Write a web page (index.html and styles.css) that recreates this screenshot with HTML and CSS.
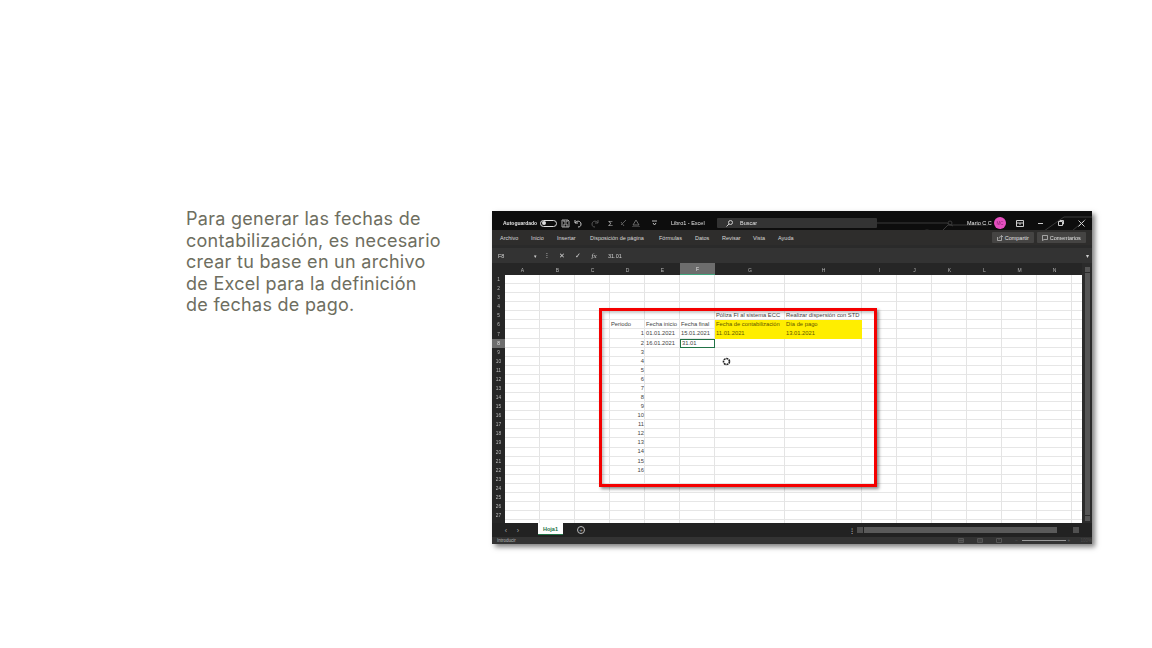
FILE: index.html
```html
<!DOCTYPE html>
<html lang="es">
<head>
<meta charset="utf-8">
<title>Fechas de contabilización</title>
<link rel="stylesheet" href="styles.css">
</head>
<body>
<main class="slide">
  <p class="lead">Para generar las fechas de<br>contabilización, es necesario<br>crear tu base en un archivo<br>de Excel para la definición<br>de fechas de pago.</p>
  <section class="excel">
    <header class="titlebar">
      <svg class="circuit" width="260" height="20" viewBox="0 0 260 20"><g fill="none" stroke="#3a3a3a" stroke-width="1"><path d="M45 12H115l6 3"/><circle cx="118" cy="12" r="2"/><circle cx="95" cy="26" r="7"/><path d="M110 20l6-6h40"/><path d="M212 20l20-14h28"/><path d="M240 20l14-12"/></g></svg>
      <span class="t-auto">Autoguardado</span>
      <span class="toggle"><i></i></span>
      <svg class="ti ti-save" width="9" height="9" viewBox="0 0 9 9"><path d="M1 1h6l1 1v6H1zM3 1v2h3V1M3 8V5h3v3" fill="none" stroke="#a8a8a8"/></svg>
      <svg class="ti ti-undo" width="9" height="9" viewBox="0 0 9 9"><path d="M1 1v3h3M1 4c2-3 6-2 6 1 0 2-1 3-3 3" fill="none" stroke="#c8c8c8"/></svg>
      <svg class="ti ti-redo" width="9" height="9" viewBox="0 0 9 9"><path d="M8 1v3H5M8 4C6 1 2 2 2 5c0 2 1 3 3 3" fill="none" stroke="#555"/></svg>
      <span class="ti-sum">Σ</span>
      <svg class="ti ti-brush" width="8" height="8" viewBox="0 0 8 8"><path d="M1 6l5-5M1 3l3 4" fill="none" stroke="#5c5c5c"/></svg>
      <svg class="ti ti-fill" width="8" height="8" viewBox="0 0 8 8"><path d="M4 1l3 5H1zM0 8h8" fill="none" stroke="#6a6a6a"/></svg>
      <svg class="ti ti-more" width="5" height="6" viewBox="0 0 5 6"><path d="M0 1h5M1 3l1.500 2L4 3" fill="none" stroke="#bbb"/></svg>
      <span class="t-file">Libro1 - Excel</span>
      <div class="search">
        <svg width="7" height="7" viewBox="0 0 7 7"><circle cx="4.500" cy="2.500" r="2" fill="none" stroke="#ccc"/><path d="M3 4L.5 6.500" stroke="#ccc"/></svg>
        <span>Buscar</span>
      </div>
      <span class="t-user">Mario C C</span>
      <span class="avatar">MC</span>
      <svg class="wb wb-ribbon" width="8" height="7" viewBox="0 0 8 7"><path d="M.5.500h7v6h-7zM.5 3h7M4 3v2" fill="none" stroke="#ccc"/></svg>
      <span class="wb wb-min"></span>
      <svg class="wb wb-max" width="6" height="6" viewBox="0 0 6 6"><path d="M.5 1.500h4v4h-4zM2 1.500V.5h3.500v3.500h-1" fill="none" stroke="#ccc"/></svg>
      <svg class="wb wb-close" width="7" height="7" viewBox="0 0 7 7"><path d="M.5.500l6 6M6.500.500l-6 6" stroke="#ccc"/></svg>
    </header>

    <nav class="ribbon">
      <span class="tab w-1">Archivo</span>
      <span class="tab w-2">Inicio</span>
      <span class="tab w-3">Insertar</span>
      <span class="tab w-4">Disposición de página</span>
      <span class="tab w-5">Fórmulas</span>
      <span class="tab w-6">Datos</span>
      <span class="tab w-7">Revisar</span>
      <span class="tab w-8">Vista</span>
      <span class="tab w-9">Ayuda</span>
      <span class="rb rb-share">
        <svg width="6" height="6" viewBox="0 0 6 6"><path d="M.5 2v3.500h4V3M2 3.500C2 2 3 1.500 5.500 1.500M4 .2l1.500 1.300L4 2.800" fill="none" stroke="#ccc" stroke-width=".7"/></svg>
        Compartir
      </span>
      <span class="rb rb-comments">
        <svg width="6" height="6" viewBox="0 0 6 6"><path d="M.5.500h5v4H2L.5 5.500z" fill="none" stroke="#ccc" stroke-width=".7"/></svg>
        Comentarios
      </span>
    </nav>

    <div class="formula">
      <span class="namebox"><span>F8</span><b>▾</b></span>
      <span class="fdots">⁝</span>
      <span class="fbtn">✕</span>
      <span class="fbtn">✓</span>
      <span class="fbtn fx">fx</span>
      <span class="fval">31.01</span>
      <span class="fdown">▾</span>
    </div>

    <div class="workarea">
      <div class="colheads">
        <span class="corner"></span>
        <span>A</span><span>B</span><span>C</span><span>D</span><span>E</span><span class="on">F</span><span>G</span><span>H</span><span>I</span><span>J</span><span>K</span><span>L</span><span>M</span><span>N</span><span></span>
      </div>
      <div class="rowheads">
        <span>1</span><span>2</span><span>3</span><span>4</span><span>5</span><span>6</span><span>7</span><span class="on">8</span><span>9</span><span>10</span><span>11</span><span>12</span><span>13</span><span>14</span><span>15</span><span>16</span><span>17</span><span>18</span><span>19</span><span>20</span><span>21</span><span>22</span><span>23</span><span>24</span><span>25</span><span>26</span><span>27</span>
      </div>
      <div class="sheet">
        <div class="row"></div><div class="row"></div><div class="row"></div><div class="row"></div>
        <div class="row"><span class="c-g nw">Póliza FI al sistema ECC</span><span class="c-h nw">Realizar dispersión con STD</span></div>
        <div class="row"><span class="c-d">Periodo</span><span class="c-e">Fecha inicio</span><span class="c-f">Fecha final</span><span class="c-g y">Fecha de contabilización</span><span class="c-h y">Día de pago</span></div>
        <div class="row"><span class="c-d num">1</span><span class="c-e">01.01.2021</span><span class="c-f">15.01.2021</span><span class="c-g y">11.01.2021</span><span class="c-h y">13.01.2021</span></div>
        <div class="row"><span class="c-d num">2</span><span class="c-e">16.01.2021</span><span class="c-f sel">31.01</span></div>
        <div class="row"><span class="c-d num">3</span></div>
        <div class="row"><span class="c-d num">4</span></div>
        <div class="row"><span class="c-d num">5</span></div>
        <div class="row"><span class="c-d num">6</span></div>
        <div class="row"><span class="c-d num">7</span></div>
        <div class="row"><span class="c-d num">8</span></div>
        <div class="row"><span class="c-d num">9</span></div>
        <div class="row"><span class="c-d num">10</span></div>
        <div class="row"><span class="c-d num">11</span></div>
        <div class="row"><span class="c-d num">12</span></div>
        <div class="row"><span class="c-d num">13</span></div>
        <div class="row"><span class="c-d num">14</span></div>
        <div class="row"><span class="c-d num">15</span></div>
        <div class="row"><span class="c-d num">16</span></div>
        <div class="row"></div><div class="row"></div><div class="row"></div><div class="row"></div><div class="row"></div>
        <div class="redbox"></div>
        <svg class="busy" width="9" height="9" viewBox="0 0 9 9"><circle cx="4.500" cy="4.500" r="3" fill="#fff" stroke="#222" stroke-width="1.600" stroke-dasharray="2 .7"/></svg>
      </div>
      <aside class="vscroll"><i class="arrow"></i><i class="thumb"></i><i class="arrow"></i></aside>
    </div>

    <div class="tabs">
      <span class="nav">‹</span><span class="nav">›</span>
      <span class="sheet-tab">Hoja1</span>
      <span class="plus">+</span>
      <span class="hdots">⁝</span>
      <div class="hscroll"><i class="arrow"></i><i class="hthumb"></i><i class="arrow"></i></div>
    </div>

    <footer class="status">
      <span class="st-left">Introducir</span>
      <svg class="vw vw-1" width="6" height="5" viewBox="0 0 6 5"><path d="M.5.500h5v4h-5zM2 .5v4M4 .5v4M.5 2.500h5" fill="none" stroke="#555"/></svg>
      <svg class="vw vw-2" width="6" height="5" viewBox="0 0 6 5"><path d="M.5.500h5v4h-5zM2 .5v4M4 .5v4" fill="none" stroke="#555"/></svg>
      <svg class="vw vw-3" width="6" height="5" viewBox="0 0 6 5"><path d="M.5.500h5v4h-5zM3 .5v2" fill="none" stroke="#555"/></svg>
      <span class="zm">−</span>
      <span class="slider"></span>
      <span class="zm">+</span>
      <span class="pct">100%</span>
    </footer>
  </section>
</main>
</body>
</html>
```
FILE: styles.css
```css
* { box-sizing: border-box; }
html, body { margin: 0; height: 100%; background: #fff; overflow: hidden; }
.slide { display: flex; align-items: flex-start; width: 1152px; height: 648px; padding: 208px 0 0 186px; font-family: "Liberation Sans", Arial, sans-serif; }
.lead { margin: 0; width: 306px; font: 400 18px/21.6px Inter, "Open Sans", sans-serif; letter-spacing: .27px; color: #6e6e60; }

.excel { display: flex; flex-direction: column; width: 600px; height: 333px; margin-top: 3px; background: #2a2a2a; box-shadow: 3px 3px 5px rgba(0,0,0,.5); filter: blur(.55px); color: #c8c8c8; font-size: 5.500px; overflow: hidden; }

.titlebar { position: relative; display: flex; align-items: center; flex: none; height: 19px; padding: 5px 0 0 11px; background: #0d0d0d; overflow: hidden; }
.circuit { position: absolute; left: 340px; top: 0; }
.titlebar > :not(.circuit) { position: relative; flex: none; }
.t-auto { width: 36px; color: #e0e0e0; font-weight: 700; font-size: 5px; }
.toggle { display: flex; justify-content: flex-start; align-items: center; width: 17px; height: 7px; margin-left: 1px; border: 1px solid #ddd; border-radius: 4px; padding-left: 1px; }
.toggle i { width: 4px; height: 4px; border-radius: 50%; background: #ddd; }
.ti-save { margin-left: 4px; }
.ti-undo { margin-left: 4px; }
.ti-redo { margin-left: 7px; }
.ti-sum { width: 7px; margin-left: 9px; font-size: 8px; color: #bbb; }
.ti-brush { margin-left: 5px; }
.ti-fill { margin-left: 4px; }
.ti-more { margin-left: 12px; }
.t-file { width: 46px; margin-left: 14px; color: #e0e0e0; }
.search { display: flex; align-items: center; gap: 7px; width: 160px; height: 10px; padding-left: 9px; background: #333; border-radius: 1px; color: #e0e0e0; }
.t-user { margin-left: 90px; width: 26px; color: #e8e8e8; }
.avatar { display: flex; align-items: center; justify-content: center; width: 12px; height: 12px; margin-left: 1px; border-radius: 50%; background: #e64fc0; color: #8d2a78; font-size: 4.500px; }
.wb-ribbon { margin-left: 10px; }
.wb-min { width: 5px; height: 1px; margin-left: 14px; background: #ccc; }
.wb-max { margin-left: 15px; }
.wb-close { margin-left: 14px; }

.ribbon { display: flex; align-items: center; flex: none; height: 15px; padding-left: 8px; background: #2e2d2c; color: #d8d8d8; }
.tab { flex: none; margin-right: 12px; }
.w-1 { width: 19px; }
.w-2 { width: 14px; }
.w-3 { width: 20px; margin-right: 13px; }
.w-4 { width: 57px; }
.w-5 { width: 24px; }
.w-6 { width: 15px; }
.w-7 { width: 19px; }
.w-8 { width: 13px; }
.w-9 { width: 16px; margin-right: 198px; }
.rb { display: flex; align-items: center; justify-content: center; gap: 1.500px; flex: none; height: 11px; background: #454443; border-radius: 1px; color: #e0e0e0; }
.rb-share { width: 42px; }
.rb-comments { width: 49px; margin-left: 3px; }

.formula { display: flex; align-items: center; flex: none; height: 15px; margin-top: 3px; padding-left: 3px; background: #333; color: #d0d0d0; }
.namebox { display: flex; justify-content: space-between; align-items: center; width: 45px; height: 12px; padding: 0 3px; }
.namebox b { font-size: 5px; font-weight: 400; }
.fdots { width: 8px; margin-left: 6px; font-size: 7px; }
.fbtn { width: 16px; text-align: center; font-size: 7px; }
.fx { font-family: "Liberation Serif", serif; font-style: italic; }
.fval { margin-left: 6px; }
.fdown { margin-left: auto; margin-right: 3px; font-size: 6px; }

.workarea { display: grid; grid-template-columns: 13px 577px 10px; grid-template-rows: 12px 248px; flex: none; background: #262626; }
.colheads { display: grid; grid-column: 1 / 3; grid-template-columns: 13px repeat(6, 35px) 70px 77px repeat(6, 35px) 10px; align-items: stretch; }
.colheads span { display: flex; align-items: center; justify-content: center; padding-top: 1px; color: #b4b4b4; font-size: 5px; }
.colheads .on { background: #6d6d6d; border-bottom: 1px solid #3fa37c; color: #e0e0e0; }
.rowheads { display: flex; flex-direction: column; overflow: hidden; }
.rowheads span { display: flex; align-items: center; justify-content: center; flex: none; height: 9.080px; color: #bcbcbc; font-size: 4.800px; }
.rowheads .on { background: #6d6d6d; color: #e8e8e8; }

.sheet { position: relative; overflow: hidden; color: #444; font-size: 5.800px; background-color: #fff;
  background-image:
    repeating-linear-gradient(to bottom, transparent 0, transparent 8.080px, #e6e6e6 8.080px, #e6e6e6 9.080px),
    repeating-linear-gradient(to right, transparent 0, transparent 34px, #e4e4e4 34px, #e4e4e4 35px);
  background-size: 100% 100%, 210px 100%;
  background-repeat: no-repeat;
}
.sheet::before { content: ""; position: absolute; inset: 0; background:
    linear-gradient(#e4e4e4, #e4e4e4) 209px 0 / 1px 100% no-repeat,
    linear-gradient(#e4e4e4, #e4e4e4) 279px 0 / 1px 100% no-repeat,
    linear-gradient(#e4e4e4, #e4e4e4) 356px 0 / 1px 100% no-repeat,
    linear-gradient(#e4e4e4, #e4e4e4) 391px 0 / 1px 100% no-repeat,
    linear-gradient(#e4e4e4, #e4e4e4) 426px 0 / 1px 100% no-repeat,
    linear-gradient(#e4e4e4, #e4e4e4) 461px 0 / 1px 100% no-repeat,
    linear-gradient(#e4e4e4, #e4e4e4) 496px 0 / 1px 100% no-repeat,
    linear-gradient(#e4e4e4, #e4e4e4) 531px 0 / 1px 100% no-repeat,
    linear-gradient(#e4e4e4, #e4e4e4) 566px 0 / 1px 100% no-repeat; }
.row { position: relative; display: grid; grid-template-columns: repeat(3, 35px) 35px 35px 35px 70px 77px; height: 9.080px; line-height: 9px; white-space: nowrap; }
.row span { padding-left: 1px; }
.c-d { grid-column: 4; }
.c-e { grid-column: 5; }
.c-f { grid-column: 6; }
.c-g { grid-column: 7; }
.c-h { grid-column: 8; }
.num { padding-right: 1px; text-align: right; }
.y { background: #ffee00; color: #5f5700; }
.sel { border: 1px solid #217346; line-height: 7px; }
.redbox { position: absolute; left: 94px; top: 33px; width: 278px; height: 179px; border: 3px solid #f40000; box-shadow: 2px 2px 3px rgba(0,0,0,.45), inset 2px 2px 3px rgba(0,0,0,.22); }
.busy { position: absolute; left: 216.500px; top: 81.500px; }

.vscroll { display: flex; flex-direction: column; grid-column: 3; grid-row: 1 / 3; padding: 4px 2.500px 2px; gap: 1px; background: #2b2b2b; }
.vscroll .arrow { flex: none; height: 5px; background: #555; }
.vscroll .thumb { flex: 1; background: #555; }

.tabs { display: flex; align-items: center; flex: none; height: 14px; background: #222; color: #aaa; }
.nav { width: 12px; text-align: center; font-size: 7px; }
.nav:first-child { margin-left: 8px; }
.sheet-tab { display: flex; align-items: center; justify-content: center; align-self: flex-start; width: 25px; height: 12px; margin-left: 14px; margin-right: 14px; background: #fff; border-bottom: 1px solid #217346; color: #217346; font-weight: 700; }
.plus { display: flex; align-items: center; justify-content: center; width: 8px; height: 8px; border: 1px solid #bbb; border-radius: 50%; line-height: 1; font-size: 6px; }
.hdots { margin-left: 266px; font-size: 8px; color: #ccc; }
.hscroll { display: flex; gap: 1px; align-items: stretch; width: 223px; height: 6px; margin-left: 4px; }
.hscroll .arrow { flex: none; width: 6px; background: #505050; }
.hscroll .hthumb { flex: none; width: 193px; background: #5a5a5a; margin-right: 15px; }

.status { display: flex; align-items: center; flex: none; flex-grow: 1; padding-left: 5px; background: #333; color: #b8b8b8; font-size: 4.500px; }
.st-left { width: 467px; }
.vw { flex: none; margin-right: 13px; }
.zm { width: 5px; color: #666; }
.slider { width: 44px; height: 1px; margin: 0 2px; background: #9a9a9a; }
.pct { margin-left: 8px; color: #4d4d4d; }
```
